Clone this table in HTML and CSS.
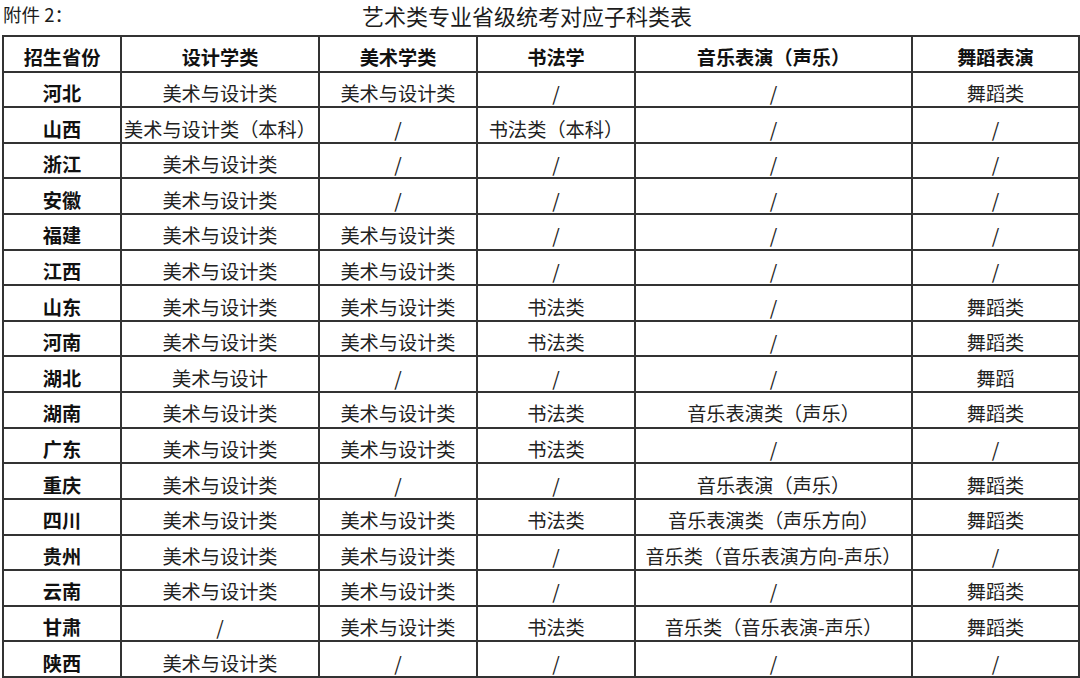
FILE: index.html
```html
<!DOCTYPE html>
<html lang="zh-CN">
<head>
<meta charset="utf-8">
<title>艺术类专业省级统考对应子科类表</title>
<link rel="stylesheet" href="styles.css">
</head>
<body>
<div class="caption">
  <span class="note">附件 2：</span>
  <span class="title">艺术类专业省级统考对应子科类表</span>
</div>
<div class="grid">
  <div class="cell head">招生省份</div><div class="cell head">设计学类</div><div class="cell head">美术学类</div><div class="cell head">书法学</div><div class="cell head">音乐表演（声乐）</div><div class="cell head">舞蹈表演</div>

  <div class="cell prov">河北</div><div class="cell">美术与设计类</div><div class="cell">美术与设计类</div><div class="cell">/</div><div class="cell">/</div><div class="cell">舞蹈类</div>
  <div class="cell prov">山西</div><div class="cell">美术与设计类（本科）</div><div class="cell">/</div><div class="cell">书法类（本科）</div><div class="cell">/</div><div class="cell">/</div>
  <div class="cell prov">浙江</div><div class="cell">美术与设计类</div><div class="cell">/</div><div class="cell">/</div><div class="cell">/</div><div class="cell">/</div>
  <div class="cell prov">安徽</div><div class="cell">美术与设计类</div><div class="cell">/</div><div class="cell">/</div><div class="cell">/</div><div class="cell">/</div>
  <div class="cell prov">福建</div><div class="cell">美术与设计类</div><div class="cell">美术与设计类</div><div class="cell">/</div><div class="cell">/</div><div class="cell">/</div>
  <div class="cell prov">江西</div><div class="cell">美术与设计类</div><div class="cell">美术与设计类</div><div class="cell">/</div><div class="cell">/</div><div class="cell">/</div>
  <div class="cell prov">山东</div><div class="cell">美术与设计类</div><div class="cell">美术与设计类</div><div class="cell">书法类</div><div class="cell">/</div><div class="cell">舞蹈类</div>
  <div class="cell prov">河南</div><div class="cell">美术与设计类</div><div class="cell">美术与设计类</div><div class="cell">书法类</div><div class="cell">/</div><div class="cell">舞蹈类</div>
  <div class="cell prov">湖北</div><div class="cell">美术与设计</div><div class="cell">/</div><div class="cell">/</div><div class="cell">/</div><div class="cell">舞蹈</div>
  <div class="cell prov">湖南</div><div class="cell">美术与设计类</div><div class="cell">美术与设计类</div><div class="cell">书法类</div><div class="cell">音乐表演类（声乐）</div><div class="cell">舞蹈类</div>
  <div class="cell prov">广东</div><div class="cell">美术与设计类</div><div class="cell">美术与设计类</div><div class="cell">书法类</div><div class="cell">/</div><div class="cell">/</div>
  <div class="cell prov">重庆</div><div class="cell">美术与设计类</div><div class="cell">/</div><div class="cell">/</div><div class="cell">音乐表演（声乐）</div><div class="cell">舞蹈类</div>
  <div class="cell prov">四川</div><div class="cell">美术与设计类</div><div class="cell">美术与设计类</div><div class="cell">书法类</div><div class="cell">音乐表演类（声乐方向）</div><div class="cell">舞蹈类</div>
  <div class="cell prov">贵州</div><div class="cell">美术与设计类</div><div class="cell">美术与设计类</div><div class="cell">/</div><div class="cell">音乐类（音乐表演方向-声乐）</div><div class="cell">/</div>
  <div class="cell prov">云南</div><div class="cell">美术与设计类</div><div class="cell">美术与设计类</div><div class="cell">/</div><div class="cell">/</div><div class="cell">舞蹈类</div>
  <div class="cell prov">甘肃</div><div class="cell">/</div><div class="cell">美术与设计类</div><div class="cell">书法类</div><div class="cell">音乐类（音乐表演-声乐）</div><div class="cell">舞蹈类</div>
  <div class="cell prov">陕西</div><div class="cell">美术与设计类</div><div class="cell">/</div><div class="cell">/</div><div class="cell">/</div><div class="cell">/</div>
</div>
</body>
</html>
```

FILE: styles.css
```css
html, body {
  margin: 0;
  padding: 0;
  background: #ffffff;
}

body {
  font-family: "Noto Sans CJK SC", "Noto Sans", sans-serif;
  color: #1c1c1c;
  width: 1080px;
  height: 678px;
  overflow: hidden;
}

.caption {
  display: flex;
  align-items: flex-start;
  height: 35px;
  padding-left: 3px;
}

.note {
  width: 359px;
  font-size: 18.5px;
  line-height: 28px;
}

.title {
  font-size: 22px;
  line-height: 30px;
}

.grid {
  margin-left: 2px;
  width: 1078px;
  height: 643px;
  box-sizing: border-box;
  padding: 2px;
  background: #333333;
  display: grid;
  grid-template-columns: 116px 196px 156px 156px 275px 165px;
  grid-template-rows: repeat(18, 1fr);
  gap: 2px;
}

.cell {
  background: #ffffff;
  display: flex;
  align-items: center;
  justify-content: center;
  padding-top: 7px;
  box-sizing: border-box;
  font-size: 19.2px;
  white-space: nowrap;
  color: #222222;
  overflow: hidden;
}

.head,
.prov {
  font-weight: 700;
  color: #111111;
}
```
